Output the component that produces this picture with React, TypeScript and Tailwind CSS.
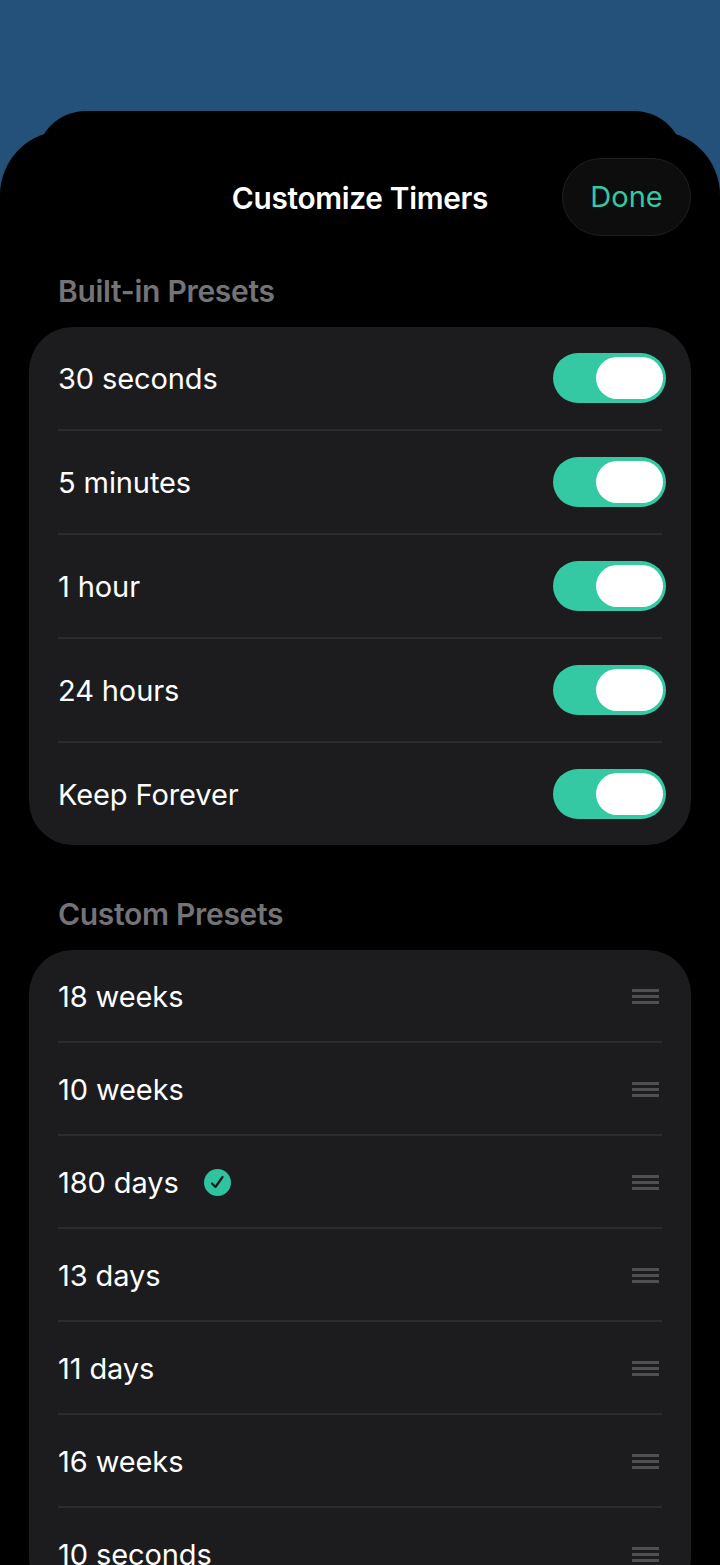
import React from 'react';

const BUILT_IN = ['30 seconds', '5 minutes', '1 hour', '24 hours', 'Keep Forever'];
const CUSTOM = ['18 weeks', '10 weeks', '180 days', '13 days', '11 days', '16 weeks', '10 seconds'];

function Toggle() {
  return (
    <div className="-mr-[4px] -mt-[2px] flex h-[50px] w-[113px] items-center justify-end rounded-full bg-[#34c8a3] pr-[3px]">
      <div className="h-[42px] w-[67px] rounded-full bg-white" />
    </div>
  );
}

function CheckBadge() {
  return (
    <svg width="27" height="27" viewBox="0 0 27 27" className="ml-[25px]">
      <circle cx="13.5" cy="13.5" r="13.5" fill="#2fc4a0" />
      <path d="M8 14.5l3.5 3.5 7-10" fill="none" stroke="#1c1c1e" strokeWidth="2.2" strokeLinecap="round" strokeLinejoin="round" />
    </svg>
  );
}

function Grip() {
  return (
    <div className="mr-[3px] flex w-[27px] flex-col gap-[3px]">
      <div className="h-[3px] bg-[#505053]" />
      <div className="h-[3px] bg-[#505053]" />
      <div className="h-[3px] bg-[#505053]" />
    </div>
  );
}

export default function App() {
  return (
    <div className="h-[1565px] w-[720px] overflow-hidden bg-[#24517a] pt-[111px] font-['Inter',sans-serif] text-white">
      <div className="mx-[36px] h-[60px] rounded-t-[50px] bg-black" />
      <div className="-mt-[40px] h-[1500px] rounded-t-[64px] bg-black">
        <div className="relative flex h-[134px] items-center justify-center">
          <h1 className="text-[29.8px] font-semibold tracking-[-0.3px]">Customize Timers</h1>
          <button className="absolute right-[29px] top-[27px] flex h-[78px] w-[129px] items-center justify-center rounded-[39px] border border-[#1f1f1f] bg-[#0d0d0d] text-[29px] text-[#34c8a3]">
            Done
          </button>
        </div>

        <div className="mx-[29px] pt-[6px]">
          <h2 className="pl-[29px] text-[30px] font-semibold leading-[40px] tracking-[-0.3px] text-[#737378]">Built-in Presets</h2>
          <div className="mt-[16px] rounded-[44px] bg-[#1c1c1e] px-[29px]">
            {BUILT_IN.map((label, i) => (
              <div key={label} className={i < BUILT_IN.length - 1 ? 'flex h-[104px] items-center justify-between border-b-2 border-[#2c2c2e] pt-[2px]' : 'flex h-[102px] items-center justify-between pt-[2px]'}>
                <span className="text-[29px] tracking-[-0.1px]">{label}</span>
                <Toggle />
              </div>
            ))}
          </div>

          <h2 className="mt-[49px] pl-[29px] text-[30px] font-semibold leading-[40px] tracking-[-0.3px] text-[#737378]">Custom Presets</h2>
          <div className="mt-[16px] rounded-[44px] bg-[#1c1c1e] px-[29px]">
            {CUSTOM.map((label, i) => (
              <div key={label} className="flex h-[93px] items-center border-b-2 border-[#2c2c2e] pt-[2px]">
                <span className="text-[29px] tracking-[-0.1px]">{label}</span>
                {i === 2 && <CheckBadge />}
                <div className="ml-auto">
                  <Grip />
                </div>
              </div>
            ))}
          </div>
        </div>
      </div>
    </div>
  );
}
